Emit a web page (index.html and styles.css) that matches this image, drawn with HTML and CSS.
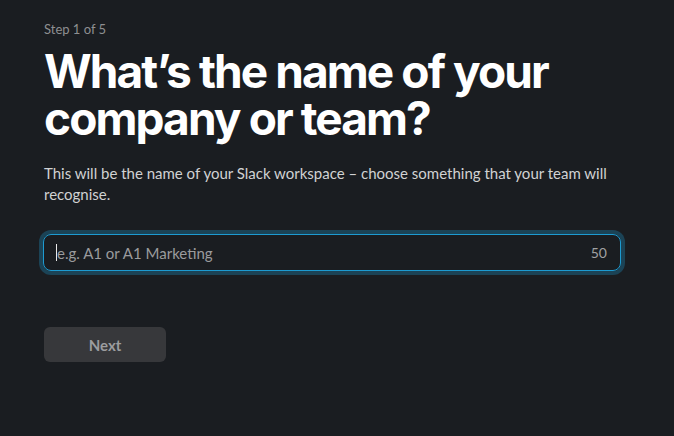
FILE: index.html
```html
<!DOCTYPE html>
<html lang="en">
<head>
<meta charset="utf-8">
<title>Step 1 of 5</title>
<link rel="stylesheet" href="styles.css">
</head>
<body>
<main class="page">
  <div class="step">Step 1 of 5</div>
  <h1 class="title">What’s the name of your company or team?</h1>
  <p class="lead">This will be the name of your Slack workspace – choose something that your team will recognise.</p>
  <div class="field">
    <span class="caret"></span>
    <span class="placeholder">e.g. A1 or A1 Marketing</span>
    <span class="count">50</span>
  </div>
  <button class="next" type="button">Next</button>
</main>
</body>
</html>
```

FILE: styles.css
```css
* { box-sizing: border-box; }
html, body { margin: 0; padding: 0; }
body {
  background: #1a1d21;
  width: 674px;
  height: 436px;
  overflow: hidden;
  font-family: Lato, "Liberation Sans", sans-serif;
}
.page {
  padding: 21px 52px 0 44px;
  display: flex;
  flex-direction: column;
  align-items: flex-start;
}
.step {
  font-size: 13px;
  line-height: 16px;
  color: #8e8f91;
}
.title {
  margin: 11px 0 0;
  font-family: Inter, "Liberation Sans", sans-serif;
  font-weight: 700;
  font-size: 46px;
  line-height: 47px;
  letter-spacing: -1.9px;
  color: #ffffff;
  width: 560px;
}
.lead {
  margin: 21px 0 0;
  font-size: 15px;
  line-height: 21px;
  color: #d1d2d3;
  width: 578px;
}
.field {
  margin-top: 29px;
  margin-left: -1px;
  width: 578px;
  height: 37px;
  border: 1px solid #1d9bd1;
  border-radius: 8px;
  box-shadow: 0 0 0 4px rgba(29, 155, 209, 0.3);
  display: flex;
  align-items: center;
  padding: 0 13px 0 12px;
  font-size: 15px;
  color: #9a9b9d;
}
.caret {
  width: 1px;
  height: 17px;
  background: #e8e8e8;
}
.placeholder { flex: 1; }
.count { color: #a0a1a3; font-size: 14px; }
.next {
  margin-top: 56px;
  width: 122px;
  height: 35px;
  border: none;
  border-radius: 6px;
  background: #37383b;
  color: #9c9d9f;
  font-family: Lato, "Liberation Sans", sans-serif;
  font-weight: 700;
  font-size: 15px;
}
```
